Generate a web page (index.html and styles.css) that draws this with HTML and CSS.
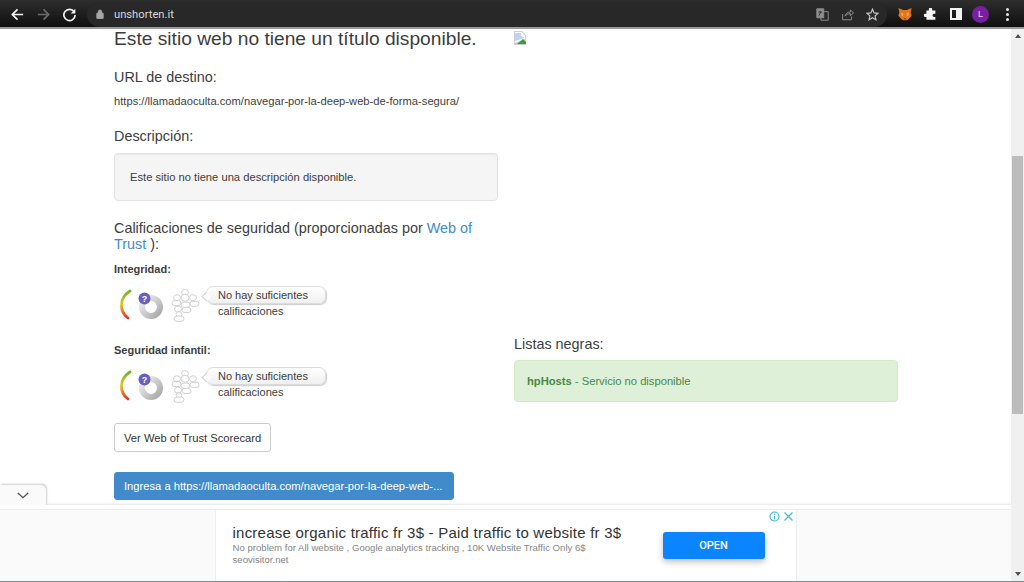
FILE: index.html
```html
<!DOCTYPE html>
<html>

<head>
  <meta charset="UTF-8">
  <title>unshorten.it</title>
  <link rel="stylesheet" href="styles.css">
</head>

<body>

  <div class="toolbar">
    <svg class="nav-icon" viewBox="0 0 16 16"><path d="M14 8H3M8 2.500 2.500 8 8 13.500" /></svg>
    <svg class="nav-icon off" viewBox="0 0 16 16"><path d="M2 8h11M8 2.500 13.500 8 8 13.500" /></svg>
    <svg class="nav-icon" viewBox="0 0 16 16"><path d="M13 5.200A6 6 0 1 0 14 8.600" /><path class="solid" d="M14.200 1.800v5h-5z" /></svg>
    <div class="omnibox">
      <svg class="lock" viewBox="0 0 10 12"><path d="M1 5h8v6.500H1zM2.800 5V3.200a2.200 2.200 0 0 1 4.400 0V5" /></svg>
      <span class="url">unshorten.it</span>
      <div class="omnibox-icons">
        <svg class="omni-icon" viewBox="0 0 16 16"><path d="M6 4.500h9v10.500H6z" /><path class="box" d="M1 1h8.500v11H1z" /><path class="cut" d="M3 5h4.500M5 3.500V5M3.500 9.500 6 5" /></svg>
        <svg class="omni-icon" viewBox="0 0 16 16"><path d="M2 7.500V14.500h11v-4M5 10c.5-3 3-5 6.500-5V2.500L15.500 6l-4 3.500V7C9 7 6.500 8 5 10z" /></svg>
        <svg class="omni-icon star" viewBox="0 0 16 16"><path d="M8 1.500 10 6l4.800.5-3.600 3.200 1 4.800L8 12l-4.200 2.500 1-4.800L1.200 6.500 6 6z" /></svg>
      </div>
    </div>
    <svg class="fox" viewBox="0 0 16 16"><path fill="#e2761b" d="M.5 1 6 3.500h4L15.500 1l-1 5 1 4-3.500 4-2 1H6l-2-1-3.500-4 1-4z" /><path fill="#f6a35c" d="M6.500 8 3 6l2 5zM9.500 8 13 6l-2 5z" /><path fill="#3a2a1c" d="M6.800 13h2.400L8 14.500z" /></svg>
    <svg class="puzzle" viewBox="0 0 16 16"><path d="M6 1.500a2 2 0 0 1 4 0V3h4v4h-1.500a2 2 0 0 0 0 4H14v3.500H3V11H1.500a2 2 0 0 1 0-4H3V3h3z" /></svg>
    <div class="panel-icon"><div class="panel-side"></div></div>
    <div class="avatar">L</div>
    <div class="menu-dots"><i></i><i></i><i></i></div>
  </div>

  <div class="viewport">
    <div class="page">
      <div class="main">
        <div class="col">
          <h2 class="site-title">Este sitio web no tiene un título disponible.</h2>
          <h3 class="dest-head">URL de destino:</h3>
          <p class="dest-url">https://llamadaoculta.com/navegar-por-la-deep-web-de-forma-segura/</p>
          <h3 class="desc-head">Descripción:</h3>
          <div class="well">Este sitio no tiene una descripción disponible.</div>
          <h3 class="safety-head">Calificaciones de seguridad (proporcionadas por <a href="#">Web of Trust</a> ):</h3>

          <div class="rating">
            <strong>Integridad:</strong>
            <div class="rating-row">
              <svg class="wot" viewBox="0 0 90 42">
                <defs>
                  <linearGradient id="gauge" x1="0" y1="0" x2="0" y2="1">
                    <stop offset="0" stop-color="#6fb52c" />
                    <stop offset="0.5" stop-color="#e8c22c" />
                    <stop offset="1" stop-color="#e2351e" />
                  </linearGradient>
                  <linearGradient id="ring" x1="0" y1="0" x2="1" y2="1">
                    <stop offset="0" stop-color="#f0f0f0" />
                    <stop offset="1" stop-color="#a8a8a8" />
                  </linearGradient>
                </defs>
                <path class="gauge" d="M15 6C4 13 4 26 13 33" />
                <circle class="donut" cx="36" cy="22" r="9" />
                <circle class="badge" cx="29.500" cy="13.500" r="6" />
                <text class="badge-mark" x="29.500" y="17">?</text>
                <g class="people" transform="translate(0 0.6) scale(1 0.87)">
                  <circle cx="70" cy="8" r="3.500" /><circle cx="62" cy="14" r="3.500" /><circle cx="70" cy="14" r="4" /><circle cx="78" cy="14" r="3.500" />
                  <rect x="57" y="17" width="9" height="6" rx="3" /><rect x="66" y="19" width="9" height="6" rx="3" /><rect x="75" y="18" width="9" height="6" rx="3" />
                  <circle cx="63" cy="27" r="3.500" /><rect x="67" y="25" width="9" height="6" rx="3" />
                  <circle cx="64" cy="33" r="3" /><rect x="59" y="35" width="10" height="6" rx="3" />
                </g>
              </svg>
              <div class="bubble-wrap">
                <div class="bubble">No hay suficientes</div>
                <div class="bubble-more">calificaciones</div>
              </div>
            </div>
          </div>

          <div class="rating">
            <strong>Seguridad infantil:</strong>
            <div class="rating-row">
              <svg class="wot" viewBox="0 0 90 42">
                <path class="gauge" d="M15 6C4 13 4 26 13 33" />
                <circle class="donut" cx="36" cy="22" r="9" />
                <circle class="badge" cx="29.500" cy="13.500" r="6" />
                <text class="badge-mark" x="29.500" y="17">?</text>
                <g class="people" transform="translate(0 0.6) scale(1 0.87)">
                  <circle cx="70" cy="8" r="3.500" /><circle cx="62" cy="14" r="3.500" /><circle cx="70" cy="14" r="4" /><circle cx="78" cy="14" r="3.500" />
                  <rect x="57" y="17" width="9" height="6" rx="3" /><rect x="66" y="19" width="9" height="6" rx="3" /><rect x="75" y="18" width="9" height="6" rx="3" />
                  <circle cx="63" cy="27" r="3.500" /><rect x="67" y="25" width="9" height="6" rx="3" />
                  <circle cx="64" cy="33" r="3" /><rect x="59" y="35" width="10" height="6" rx="3" />
                </g>
              </svg>
              <div class="bubble-wrap">
                <div class="bubble">No hay suficientes</div>
                <div class="bubble-more">calificaciones</div>
              </div>
            </div>
          </div>

          <a class="btn btn-score" href="#">Ver Web of Trust Scorecard</a>
          <a class="btn btn-primary" href="#">Ingresa a https://llamadaoculta.com/navegar-por-la-deep-web-...</a>
        </div>

        <div class="col side">
          <div class="preview">
            <svg class="broken" viewBox="0 0 14 14"><path fill="#c9ced6" d="M1 0h8l4 4v10H1z" /><path fill="#fff" d="M2 1h6.500L12 4.500V8L2 12z" /><path fill="#bcd3f5" d="M2 2h6v3l4 2L2 10z" /><path fill="#3f9c35" d="M4 13 10 8l3 3v2z" /></svg>
          </div>
          <h3 class="black-head">Listas negras:</h3>
          <div class="alert"><b>hpHosts</b> - Servicio no disponible</div>
        </div>
      </div>

      <div class="ad-bar">
        <div class="ad-tab"><svg viewBox="0 0 14 8"><path d="M1 1l6 5.500L13 1" /></svg></div>
        <div class="ad-row">
          <div class="ad">
            <div class="ad-marks">
              <svg viewBox="0 0 11 11"><circle cx="5.500" cy="5.500" r="4.500" /><path d="M5.500 5v3.200M5.500 2.500v1.200" /></svg>
              <svg viewBox="0 0 11 11"><path d="M1.500 1.500l8 8M9.500 1.500l-8 8" /></svg>
            </div>
            <div class="ad-text">
              <div class="ad-title">increase organic traffic fr 3$ - Paid traffic to website fr 3$</div>
              <div class="ad-sub">No problem for All website , Google analytics tracking , 10K Website Traffic Only 6$</div>
              <div class="ad-sub">seovisitor.net</div>
            </div>
            <div class="ad-open">OPEN</div>
          </div>
        </div>
      </div>
    </div>

    <div class="scrollbar">
      <div class="arrow-up"></div>
      <div class="thumb"></div>
      <div class="arrow-down"></div>
    </div>
  </div>

  <div class="taskbar-edge"></div>

</body>

</html>
```

FILE: styles.css
```css
body * {
  box-sizing: border-box;
}

html,
body {
  height: 100%;
}

body {
  margin: 0;
  display: flex;
  flex-direction: column;
  overflow: hidden;
  font-family: "Liberation Sans", Arial, sans-serif;
  color: #3d3d3d;
  background: #fff;
}

h2,
h3,
p {
  margin: 0;
  font-weight: 400;
}

a {
  color: #428bca;
  text-decoration: none;
}

/* browser chrome */

.toolbar {
  flex: 0 0 29px;
  display: flex;
  align-items: center;
  padding: 1px 0 0 10px;
  background: linear-gradient(#2e2e2e, #0f0f0f);
  border-bottom: 2px solid #9a9a9a;
}

.nav-icon {
  width: 15px;
  height: 15px;
  margin-right: 11px;
  fill: none;
  stroke: #f2f2f2;
  stroke-width: 1.8;
}

.nav-icon.off {
  stroke: #6b6b6b;
}

.nav-icon .solid {
  fill: #f2f2f2;
  stroke: none;
}

.omnibox {
  width: 800px;
  height: 25px;
  margin-left: -1px;
  display: flex;
  align-items: center;
  padding-left: 9px;
  border-radius: 13px;
  background: #282828;
}

.lock {
  width: 8px;
  height: 10px;
  fill: #a8a8a8;
  stroke: #a8a8a8;
}

.url {
  margin-left: 10px;
  font-size: 11.200px;
  font-family: "Roboto", sans-serif;
  color: #d8d8d8;
}

.omnibox-icons {
  margin-left: auto;
  margin-right: 8px;
  display: flex;
  gap: 12px;
}

.omni-icon {
  width: 13px;
  height: 13px;
  fill: none;
  stroke: #8e8e8e;
  stroke-width: 1.2;
}

.omni-icon .box {
  fill: #8e8e8e;
}

.omni-icon .cut {
  stroke: #333;
}

.omni-icon.star {
  stroke: #c4c4c4;
  stroke-width: 1.5;
}

.fox {
  width: 14px;
  height: 14px;
  margin-left: 11px;
}

.puzzle {
  width: 13px;
  height: 13px;
  margin-left: 12px;
  fill: #f4f4f4;
}

.panel-icon {
  width: 12px;
  height: 12px;
  margin-left: 13px;
  border: 2px solid #f4f4f4;
  display: flex;
  justify-content: flex-end;
}

.panel-side {
  width: 4px;
  background: #f4f4f4;
}

.avatar {
  width: 17px;
  height: 17px;
  margin-left: 10px;
  border-radius: 50%;
  background: #7b1fa2;
  color: #e8d8f0;
  font-size: 9px;
  line-height: 17px;
  text-align: center;
}

.menu-dots {
  margin-left: 17px;
  display: flex;
  flex-direction: column;
  gap: 2px;
}

.menu-dots i {
  width: 3px;
  height: 3px;
  border-radius: 50%;
  background: #e8e8e8;
}

/* page */

.viewport {
  flex: 1;
  min-height: 0;
  display: flex;
}

.page {
  flex: 1;
  position: relative;
  overflow: hidden;
}

.main {
  display: flex;
  gap: 16px;
  padding-left: 114px;
}

.col {
  width: 384px;
  display: flex;
  flex-direction: column;
  align-items: flex-start;
}

.site-title {
  margin-top: -1px;
  font-size: 19.200px;
  line-height: 22px;
}

.dest-head {
  margin-top: 19px;
  font-size: 14.400px;
  line-height: 17px;
}

.dest-url {
  margin-top: 7px;
  font-size: 11.200px;
  line-height: 16px;
}

.desc-head {
  margin-top: 19px;
  font-size: 14.400px;
  line-height: 17px;
}

.well {
  width: 100%;
  height: 48px;
  margin-top: 8px;
  padding: 0 15px;
  display: flex;
  align-items: center;
  font-size: 11.200px;
  background: #f5f5f5;
  border: 1px solid #e3e3e3;
  border-radius: 4px;
  box-shadow: inset 0 1px 1px rgba(0, 0, 0, 0.05);
}

.safety-head {
  margin-top: 19px;
  font-size: 14.400px;
  line-height: 16px;
}

.rating {
  margin-top: 11px;
  height: 71px;
}

.rating + .rating {
  margin-top: 10px;
}

.rating strong {
  display: block;
  font-size: 11px;
  line-height: 13px;
}

.rating-row {
  margin-top: 10px;
  display: flex;
  align-items: flex-start;
}

.wot {
  width: 90px;
  height: 42px;
  margin-left: 1px;
  margin-top: -1px;
  overflow: visible;
}

.gauge {
  fill: none;
  stroke: url(#gauge);
  stroke-width: 2.800;
  stroke-linecap: round;
}

.donut {
  fill: none;
  stroke: url(#ring);
  stroke-width: 6;
}

.badge {
  fill: #6a5fc0;
}

.badge-mark {
  font-size: 9px;
  font-weight: 700;
  fill: #fff;
  text-anchor: middle;
}

.people circle,
.people rect {
  fill: #fff;
  stroke: #c8c8c8;
  stroke-width: 0.900;
}

.bubble-wrap {
  font-size: 11px;
  line-height: 16px;
}

.bubble {
  position: relative;
  width: 120px;
  height: 18px;
  margin-left: 1px;
  padding: 0 11px;
  line-height: 16px;
  background: linear-gradient(#fff, #f0f0f0);
  border: 1px solid #dcdcdc;
  border-radius: 7px;
  box-shadow: 1px 1px 1px rgba(0, 0, 0, 0.2);
}

.bubble::before {
  content: "";
  position: absolute;
  left: -4px;
  top: 6px;
  width: 6px;
  height: 6px;
  background: #fff;
  border-left: 1px solid #d0d0d0;
  border-bottom: 1px solid #d0d0d0;
  transform: rotate(45deg);
}

.bubble-more {
  margin-top: -1px;
  margin-left: 13px;
}

.btn {
  height: 29px;
  padding: 0 9px;
  display: flex;
  align-items: center;
  font-size: 11.200px;
  color: #333;
  background: #fff;
  border: 1px solid #ccc;
  border-radius: 3px;
}

.btn-score {
  margin-top: 8px;
}

.btn-primary {
  height: 28px;
  margin-top: 20px;
  width: 340px;
  color: #fff;
  background: #428bca;
  border-color: #428bca;
}

.preview {
  height: 307px;
}

.broken {
  display: block;
  width: 14px;
  height: 14px;
  margin-top: 2px;
  margin-left: -1px;
}

.black-head {
  font-size: 14.400px;
  line-height: 17px;
}

.alert {
  width: 100%;
  height: 42px;
  margin-top: 7px;
  padding: 0 12px;
  display: flex;
  align-items: center;
  white-space: pre;
  font-size: 11.200px;
  color: #468847;
  background: #dff0d8;
  border: 1px solid #d6e9c6;
  border-radius: 4px;
}

/* anchored ad over the bottom of the page */

.ad-bar {
  position: absolute;
  left: 0;
  right: 0;
  bottom: 0;
  height: 77px;
  display: flex;
  flex-direction: column;
  padding-top: 4px;
  background: #fff;
  border-top: 1px solid #ececec;
  box-shadow: 0 -1px 2px rgba(0, 0, 0, 0.05);
}

.ad-tab {
  position: absolute;
  left: 0;
  top: -20px;
  width: 46px;
  height: 20px;
  display: flex;
  align-items: center;
  justify-content: center;
  background: #fafafa;
  border-radius: 0 5px 0 0;
  box-shadow: 1px -1px 2px rgba(0, 0, 0, 0.2);
}

.ad-tab svg {
  width: 12px;
  height: 7px;
  fill: none;
  stroke: #555;
  stroke-width: 1.600;
}

.ad-row {
  flex: 1;
  display: flex;
  justify-content: center;
  background: #fafafa;
  border-top: 1px solid #ececec;
}

.ad {
  position: relative;
  width: 582px;
  padding: 0 31px 0 17px;
  display: flex;
  align-items: center;
  justify-content: space-between;
  background: #fff;
  border-left: 1px solid #eee;
  border-right: 1px solid #eee;
}

.ad-marks {
  position: absolute;
  top: 1px;
  right: 2px;
  display: flex;
  gap: 3px;
}

.ad-marks svg {
  width: 11px;
  height: 11px;
  fill: none;
  stroke: #41bcd8;
  stroke-width: 1.200;
}

.ad-text {
  margin-top: -1px;
}

.ad-title {
  font-size: 15px;
  line-height: 18px;
  letter-spacing: 0.230px;
  color: #333;
}

.ad-sub {
  font-size: 9.600px;
  line-height: 12px;
  color: #868686;
}

.ad-open {
  width: 102px;
  height: 27px;
  text-align: center;
  font-size: 11px;
  font-weight: 500;
  font-family: "Roboto", sans-serif;
  line-height: 27px;
  color: #fff;
  background: #0a84ff;
  border-radius: 3px;
  box-shadow: 0 3px 6px rgba(0, 0, 0, 0.25);
}

.scrollbar {
  flex: 0 0 13px;
  display: flex;
  flex-direction: column;
  align-items: center;
  background: #f0f0f0;
}

.arrow-up {
  margin-top: 5px;
  border: 3px solid transparent;
  border-top: 0;
  border-bottom: 4px solid #505050;
}

.thumb {
  width: 11px;
  height: 258px;
  margin-top: 118px;
  background: #bcbcbc;
}

.arrow-down {
  margin-top: auto;
  margin-bottom: 5px;
  border: 3px solid transparent;
  border-bottom: 0;
  border-top: 4px solid #505050;
}

.taskbar-edge {
  flex: 0 0 1px;
  background: #6d8fb3;
}
```
